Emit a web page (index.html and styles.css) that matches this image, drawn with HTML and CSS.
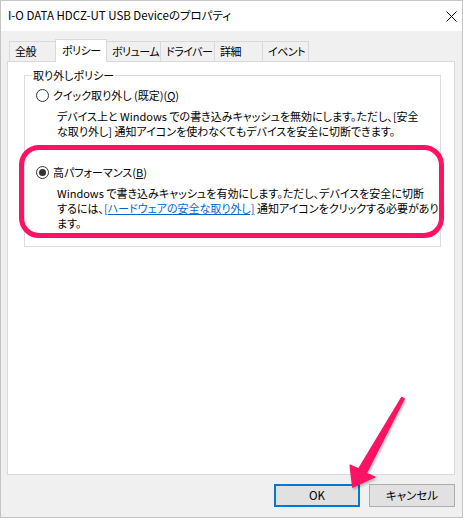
FILE: index.html
```html
<!DOCTYPE html>
<html lang="ja">
<head>
  <meta charset="UTF-8" />
  <title>I-O DATA HDCZ-UT USB Deviceのプロパティ</title>
  <link rel="stylesheet" href="styles.css">
</head>
<body>
  <div class="window">
    <div class="titlebar">
      <span class="title">I-O DATA HDCZ-UT USB Deviceのプロパティ</span>
      <svg class="close" width="11" height="11" viewBox="0 0 11 11">
        <path d="M0.5 0.5 L10.5 10.5 M10.5 0.5 L0.5 10.5" stroke="#000" stroke-width="1" fill="none"/>
      </svg>
    </div>

    <div class="body">
      <div class="tabs">
        <div class="tab w47">全般</div>
        <div class="tab w52 active">ポリシー</div>
        <div class="tab w55">ボリューム</div>
        <div class="tab w55">ドライバー</div>
        <div class="tab w49">詳細</div>
        <div class="tab w47">イベント</div>
      </div>

      <div class="panel">
        <fieldset class="group">
          <legend>取り外しポリシー</legend>
          <div class="options">
            <div class="option">
              <div class="opt-label"><span class="radio"></span>クイック取り外し (既定)(<u>Q</u>)</div>
              <p class="desc">デバイス上と Windows での書き込みキャッシュを無効にします。ただし、[安全<br>な取り外し] 通知アイコンを使わなくてもデバイスを安全に切断できます。</p>
            </div>
            <div class="option second">
              <div class="opt-label"><span class="radio checked"></span>高パフォーマンス(<u>B</u>)</div>
              <p class="desc">Windows で書き込みキャッシュを有効にします。ただし、デバイスを安全に切断<br>するには、<a class="link" href="#">[ハードウェアの安全な取り外し]</a> 通知アイコンをクリックする必要があり<br>ます。</p>
            </div>
          </div>
        </fieldset>
      </div>

      <div class="buttons">
        <button class="btn default">OK</button>
        <button class="btn">キャンセル</button>
      </div>
    </div>

    <!-- annotations drawn over the dialog -->
    <div class="highlight"></div>
    <svg class="arrow" width="463" height="518" viewBox="0 0 463 518">
      <polygon points="401.7,397.3 404.3,398.7 366.4,473.2 375,477 352.7,487.3 350,465 358.6,468.8"
               fill="#fe1263" stroke="#fe1263" stroke-width="1.2" stroke-linejoin="round"/>
    </svg>
  </div>
</body>
</html>
```

FILE: styles.css
```css
* {
  box-sizing: border-box;
}

body {
  margin: 0;
  background: #fff;
  font-family: "Noto Sans CJK JP", "Noto Sans", sans-serif;
  font-size: 11px;
  line-height: 15px;
  color: #000;
  font-feature-settings: "palt";
}

.window {
  position: relative;
  width: 463px;
  height: 518px;
  border: 1px solid #c4c4c4;
  background: #f0f0f0;
  display: flex;
  flex-direction: column;
  overflow: hidden;
}

.titlebar {
  height: 30px;
  background: #fff;
  display: flex;
  align-items: center;
  justify-content: space-between;
  padding: 0 5px 0 7px;
}

.title {
  font-size: 11.5px;
  margin-top: -1px;
}

.body {
  flex: 1;
  display: flex;
  flex-direction: column;
  padding: 8px 7px 9px 6px;
}

.tabs {
  display: flex;
  align-items: flex-end;
  height: 22px;
  padding-left: 2px;
  position: relative;
  z-index: 1;
}

.tab {
  height: 20px;
  border: 1px solid #d9d9d9;
  border-bottom: none;
  background: #f0f0f0;
  margin-right: -1px;
  padding-left: 5px;
  line-height: 19px;
  white-space: nowrap;
  font-size: 11px;
  letter-spacing: -0.5px;
}

.tab.active {
  height: 23px;
  margin-bottom: -1px;
  background: #fff;
  position: relative;
  z-index: 2;
  padding-left: 6px;
  line-height: 20px;
}

.w47 { width: 47px; }
.w49 { width: 49px; }
.w52 { width: 52px; }
.w55 { width: 55px; }

.panel {
  height: 414px;
  background: #fff;
  border: 1px solid #d9d9d9;
  padding: 6px 13px 0 16px;
}

.group {
  margin: 0;
  border: 1px solid #dcdcdc;
  padding: 5px 0 15px 6px;
  min-width: 0;
}

.group legend {
  padding: 0 1px;
  margin-left: 1px;
}

.options {
  padding-left: 5px;
}

.option.second {
  margin-top: 26px;
}

.opt-label {
  display: flex;
  align-items: center;
  white-space: nowrap;
}

.radio {
  width: 13px;
  height: 13px;
  border: 1px solid #333;
  border-radius: 50%;
  background: #fff;
  margin-right: 4px;
  display: flex;
  align-items: center;
  justify-content: center;
}

.radio.checked::after {
  content: "";
  width: 7px;
  height: 7px;
  border-radius: 50%;
  background: #333;
}

.desc {
  margin: 6px 0 0 21px;
  white-space: nowrap;
}

.link {
  color: #0066cc;
  text-decoration: underline;
}

.buttons {
  display: flex;
  justify-content: flex-end;
  gap: 9px;
  margin-top: 9px;
}

.btn {
  width: 86px;
  height: 23px;
  font: inherit;
  font-size: 11.5px;
  color: #000;
  background: #e1e1e1;
  border: 1px solid #adadad;
  padding: 0;
}

.btn.default {
  border: 2px solid #0078d7;
}

.highlight {
  position: absolute;
  left: 18px;
  top: 144px;
  width: 425px;
  height: 93px;
  border: 5px solid #fe1263;
  border-radius: 20px;
}

.arrow {
  position: absolute;
  left: -1px;
  top: -1px;
  filter: drop-shadow(1px 2px 1px rgba(0, 0, 0, 0.25));
}
```
